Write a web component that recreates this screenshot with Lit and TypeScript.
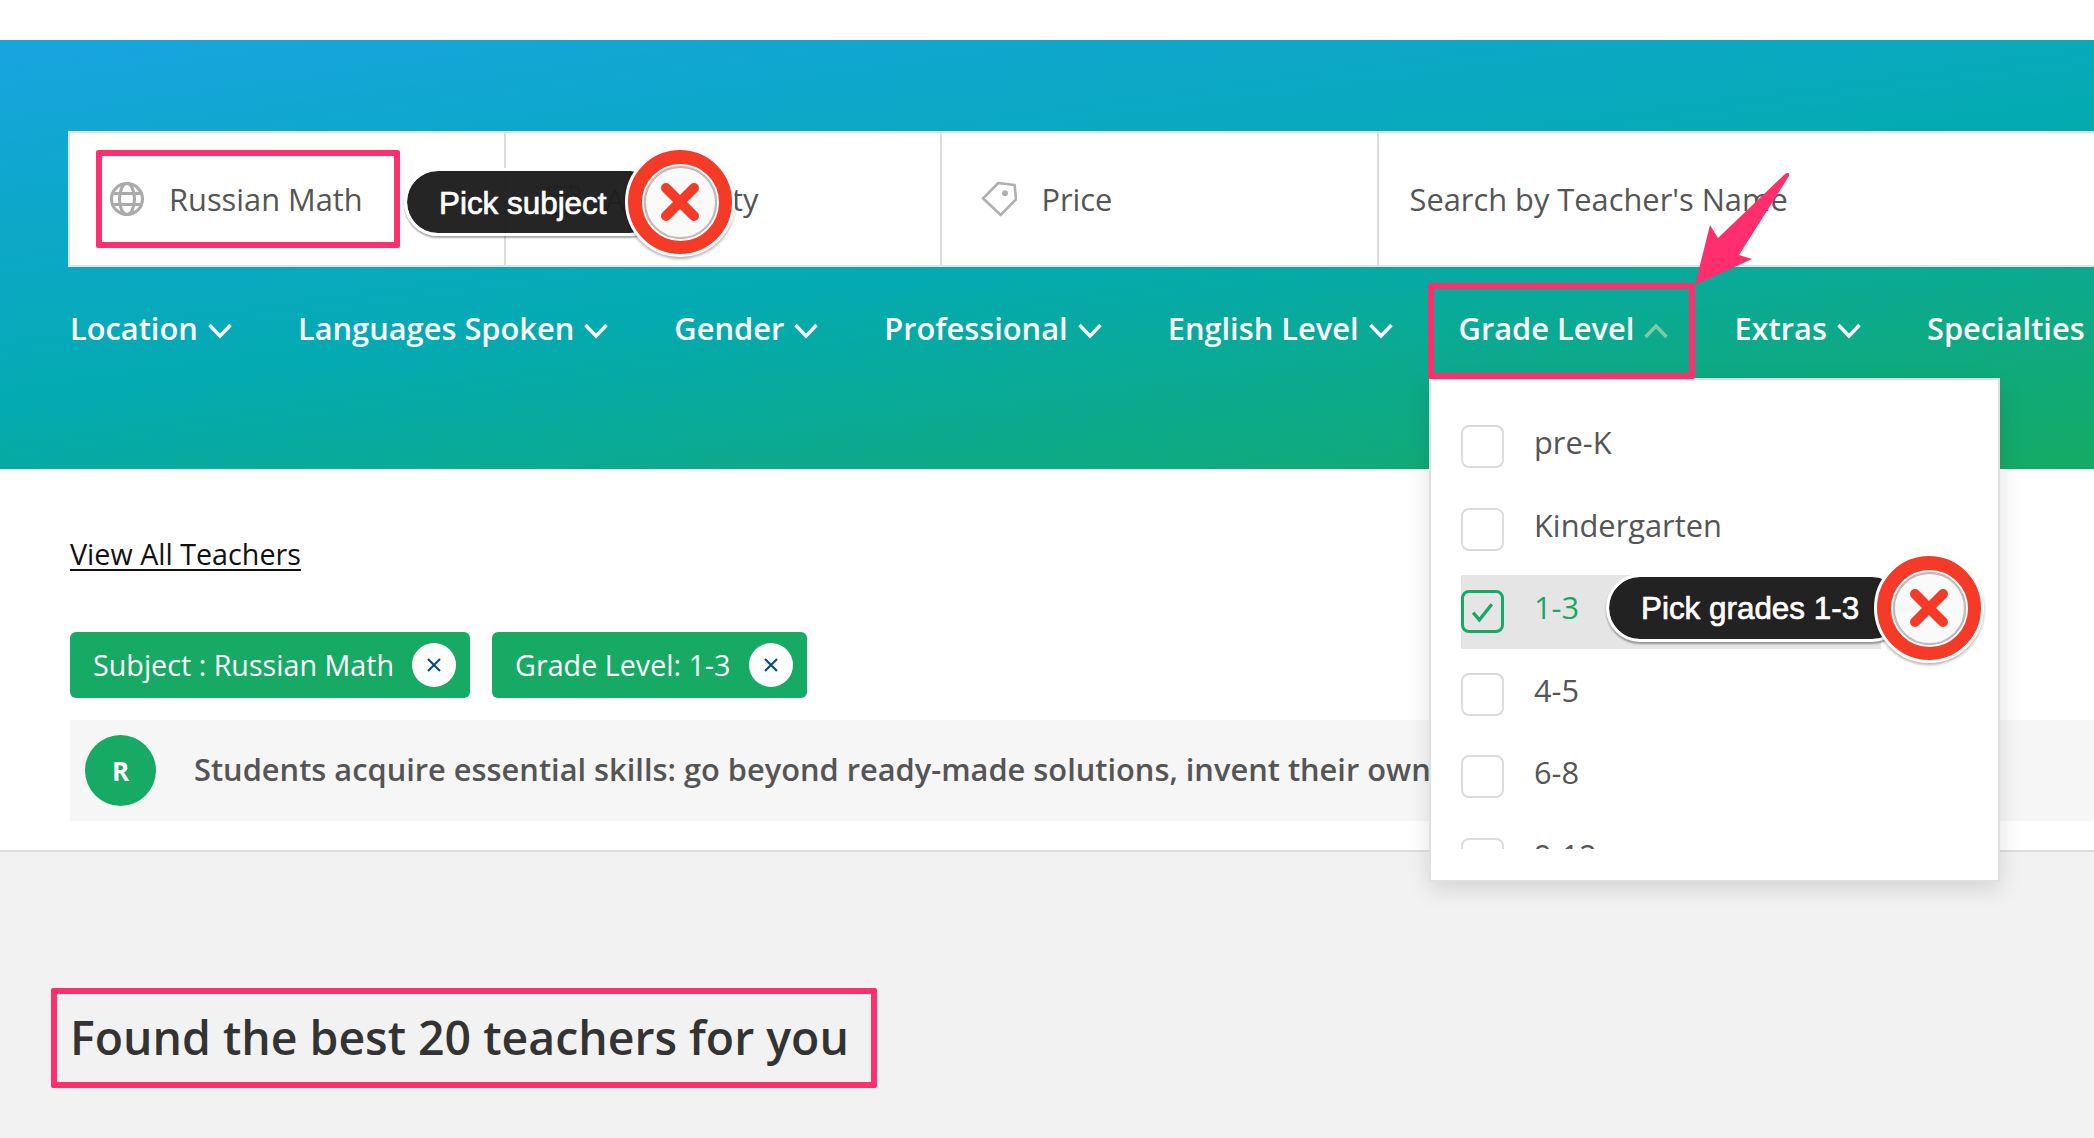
import { LitElement, html, css } from "lit";
import { customElement } from "lit/decorators.js";

const chevron = (up = false) => html`<svg class="chev ${up ? "up" : ""}" viewBox="0 0 24 16" width="24" height="16"><path d=${up ? "M1.5 14 L12 3 L22.5 14" : "M1.5 2 L12 13 L22.5 2"} fill="none" stroke="currentColor" stroke-width="3.4"/></svg>`;

const globe = html`<svg class="ico" viewBox="0 0 36 36" width="36" height="36" fill="none" stroke="#aaa" stroke-width="3.1"><circle cx="18" cy="18" r="15.5"/><ellipse cx="18" cy="18" rx="7.5" ry="15.5"/><path d="M3 12.5H33M3 23.5H33"/></svg>`;
const calendar = html`<svg class="ico" viewBox="0 0 36 36" width="36" height="36" fill="none" stroke="#888" stroke-width="2.6"><rect x="2" y="6" width="32" height="27" rx="3"/><path d="M2 14H34M10 2V9M26 2V9"/></svg>`;
const tag = html`<svg class="ico" viewBox="0 0 36 36" width="36" height="36" fill="none" stroke="#b0b0b0" stroke-width="2.6" stroke-linejoin="round"><path d="M2 17.3 L17.3 2 L33.6 4 L35 18.3 L19.7 34 Z"/><circle cx="24" cy="12.3" r="3" fill="#b0b0b0" stroke="none"/></svg>`;

const FILTERS = ["Location", "Languages Spoken", "Gender", "Professional", "English Level", "Grade Level", "Extras", "Specialties"];
const GRADES = ["pre-K", "Kindergarten", "1-3", "4-5", "6-8", "9-12"];

@customElement("app-root")
export class AppRoot extends LitElement {
  static styles = css`
    :host { display: block; position: relative; height: 1138px; overflow: hidden; background: #f2f2f2; font-family: "Open Sans", sans-serif; color: #555; }
    .topgap { height: 40px; background: #fff; }
    .hero { height: 429px; box-sizing: border-box; padding: 91px 0 0 68px; background: linear-gradient(172deg, #17a5e0 0%, #03aab2 50%, #15aa64 100%); }
    .search { display: flex; height: 136px; box-sizing: border-box; background: #fff; border: 2px solid #e2e2e2; border-right: 0; }
    .cell { display: flex; align-items: center; gap: 24px; box-sizing: border-box; width: 436.2px; padding-left: 39px; font-size: 30.8px; border-right: 2px solid #dcdcdc; }
    .cell.name { flex: 1; border-right: 0; padding-left: 31px; }
    .ico { flex: none; }
    .filters { display: flex; gap: 66.1px; margin-top: 41px; padding-left: 2px; font-size: 30.8px; font-weight: 600; color: #fff; white-space: nowrap; line-height: 40px; }
    .filter { display: flex; align-items: center; gap: 10px; }
    .chev { flex: none; margin-top: 5px; }
    .chev.up { color: #7fcb9f; }
    .results { height: 383px; box-sizing: border-box; background: #fff; border-bottom: 2px solid #dedede; padding: 65px 0 0 70px; }
    .all { display: block; width: max-content; font-size: 28.7px; line-height: 40px; color: #111; text-decoration: underline; text-underline-offset: 4px; }
    .chips { display: flex; gap: 22px; margin-top: 58px; }
    .chip { display: flex; align-items: center; height: 66px; box-sizing: border-box; padding: 0 14px 0 23px; gap: 18px; background: #16aa64; color: #fff; border-radius: 6px; font-size: 28.7px; }
    .chip-label { padding-bottom: 2px; }
    .close { display: flex; align-items: center; justify-content: center; width: 44px; height: 44px; border-radius: 50%; background: #fff; }
    .banner { display: flex; align-items: center; gap: 38px; height: 101px; margin-top: 22px; padding-left: 15px; background: #f6f6f6; font-size: 30.8px; font-weight: 600; white-space: nowrap; overflow: hidden; }
    .banner-text { padding-bottom: 3px; }
    .avatar { flex: none; display: flex; align-items: center; justify-content: center; width: 71px; height: 71px; border-radius: 50%; background: #16aa64; color: #fff; font-size: 26px; font-weight: 700; }
    .found { margin: 0; padding: 153px 0 0 70px; font-size: 46.4px; line-height: 64px; font-weight: 600; color: #333; }

    .dropdown { position: absolute; left: 1429px; top: 378px; width: 571px; height: 504px; box-sizing: border-box; background: #fff; border: 2px solid #e0e0e0; box-shadow: 0 8px 22px rgba(0,0,0,.12); padding: 30px 0 0 30px; }
    .list { height: 439px; overflow: hidden; }
    .row { display: flex; align-items: flex-start; gap: 30px; height: 74px; margin-bottom: 8.5px; width: 420px; padding-top: 15px; box-sizing: border-box; font-size: 30.8px; line-height: 34px; }
    .row.on { background: #e5e5e5; color: #16aa64; }
    .box { flex: none; width: 43px; height: 43px; box-sizing: border-box; border: 2px solid #dcdcdc; border-radius: 8px; background: #fff; }
    .on .box { border: 3.5px solid #16aa64; display: flex; align-items: center; justify-content: center; background: transparent; }

    .mark { position: absolute; box-sizing: border-box; border: 6px solid #ff2e6c; border-radius: 2px; }
    .m1 { left: 96px; top: 150px; width: 304px; height: 98px; }
    .m2 { left: 1428px; top: 283px; width: 267px; height: 96px; }
    .m3 { left: 51px; top: 988px; width: 826px; height: 100px; }
    .arrow { position: absolute; left: 1680px; top: 160px; }
    .pill { position: absolute; display: flex; align-items: center; box-sizing: border-box; height: 68px; border: 3.5px solid #fff; border-radius: 34px; box-shadow: 0 2px 2px rgba(0,0,0,.35); background: #222; background-clip: padding-box; color: #fff; font-family: "Liberation Sans", Arial, sans-serif; font-size: 31.4px; font-weight: 400; -webkit-text-stroke: .7px #fff; white-space: nowrap; padding-left: 32px; }
    .p1 { left: 404px; top: 168px; width: 260px; padding-top: 3px; background: rgba(30,30,30,.97); background-clip: padding-box; }
    .p2 { left: 1606px; top: 574px; width: 300px; padding-top: 2px; }
    .badge { position: absolute; width: 110px; height: 110px; box-sizing: border-box; border-radius: 50%; border: 3px solid #fff; box-shadow: 0 2px 3px rgba(0,0,0,.3); background: #f53b27; display: flex; align-items: center; justify-content: center; }
    .b1 { left: 625px; top: 147px; }
    .b2 { left: 1874px; top: 553px; }
    .badge i { display: flex; align-items: center; justify-content: center; width: 73px; height: 73px; box-sizing: border-box; border-radius: 50%; border: 2px solid #bbb; outline: 2px solid #fff; background: #fafafa; }
  `;

  private x() {
    return html`<svg viewBox="0 0 40 40" width="40" height="40"><path d="M6 6L34 34M34 6L6 34" stroke="#f53b27" stroke-width="10" stroke-linecap="round"/></svg>`;
  }
  private chipX() {
    return html`<svg viewBox="0 0 16 16" width="16" height="16"><path d="M2 2L14 14M14 2L2 14" stroke="#0b4a87" stroke-width="2.2"/></svg>`;
  }

  render() {
    return html`
      <div class="topgap"></div>
      <section class="hero">
        <div class="search">
          <div class="cell">${globe}<span>Russian Math</span></div>
          <div class="cell">${calendar}<span>Availability</span></div>
          <div class="cell">${tag}<span>Price</span></div>
          <div class="cell name"><span>Search by Teacher's Name</span></div>
        </div>
        <nav class="filters">
          ${FILTERS.map((f, i) => html`<div class="filter">${f}${i === 7 ? "" : chevron(i === 5)}</div>`)}
        </nav>
      </section>
      <section class="results">
        <a class="all">View All Teachers</a>
        <div class="chips">
          <div class="chip"><span class="chip-label">Subject : Russian Math</span><span class="close">${this.chipX()}</span></div>
          <div class="chip"><span class="chip-label">Grade Level: 1-3</span><span class="close">${this.chipX()}</span></div>
        </div>
        <div class="banner"><span class="avatar">R</span><span class="banner-text">Students acquire essential skills: go beyond ready-made solutions, invent their own methods and develop logic</span></div>
      </section>
      <h2 class="found">Found the best 20 teachers for you</h2>

      <div class="dropdown"><div class="list">
        ${GRADES.map((g) => html`<div class="row ${g === "1-3" ? "on" : ""}"><div class="box">${g === "1-3" ? html`<svg viewBox="0 0 24 24" width="25" height="25"><path d="M3 13L9 20L21 5" fill="none" stroke="#16aa64" stroke-width="3.2"/></svg>` : ""}</div><span>${g}</span></div>`)}
      </div></div>

      <div class="mark m1"></div><div class="mark m2"></div><div class="mark m3"></div>
      <svg class="arrow" width="120" height="130" viewBox="1680 160 120 130"><path d="M1695 285 L1710 225 L1718 238 L1784 175 Q1790 170 1789 176 L1739 255 L1752 259 Z" fill="#ff2e6c"/></svg>
      <div class="pill p1">Pick subject</div>
      <div class="badge b1"><i>${this.x()}</i></div>
      <div class="pill p2">Pick grades 1-3</div>
      <div class="badge b2"><i>${this.x()}</i></div>
    `;
  }
}
